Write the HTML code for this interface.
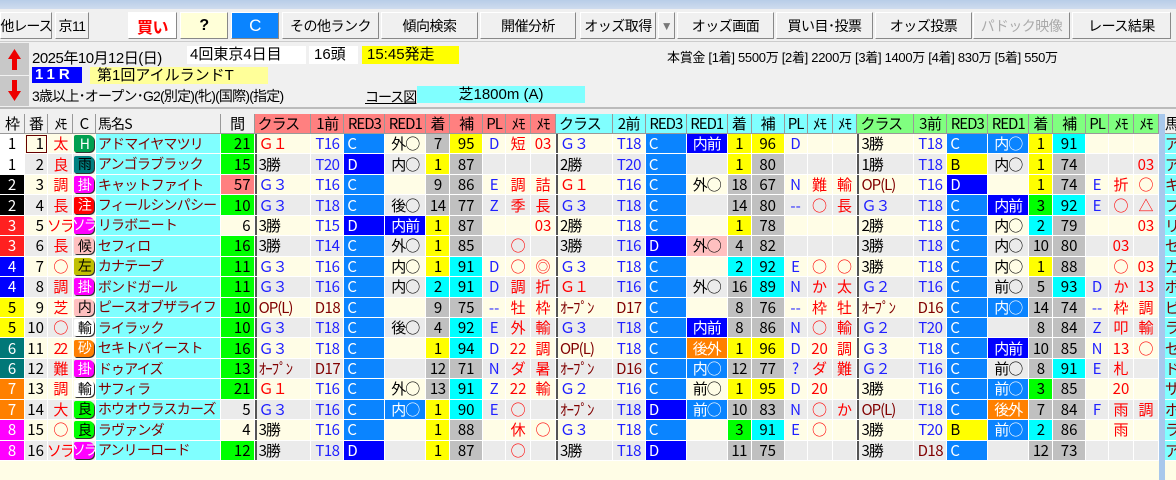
<!DOCTYPE html><html><head><meta charset="utf-8"><style>
*{margin:0;padding:0;box-sizing:border-box}
body{width:1176px;height:480px;overflow:hidden;background:#f0f0f0;font-family:"Liberation Sans","Noto Sans CJK JP",sans-serif;position:relative;font-size:14px;color:#000}
.tb{position:absolute;left:0;top:0;width:1176px;height:9px;background:linear-gradient(#b8cde8,#cfdcee)}
.btn{position:absolute;top:12px;height:27px;background:#f0f0f0;border:1px solid;border-color:#fff #888 #888 #fff;display:flex;align-items:center;justify-content:center;font-size:14px;letter-spacing:-0.5px;white-space:nowrap}
.abs{position:absolute;white-space:nowrap}
.grid{position:absolute;left:0;top:114px;width:1176px;font-family:"Noto Sans CJK JP","Liberation Sans",sans-serif}
.r{display:flex;height:20.44px}
.r>span{height:100%;border-right:1px solid #fff;border-bottom:1px solid #fff;display:flex;align-items:center;justify-content:center;white-space:nowrap;overflow:hidden;font-size:15px;line-height:1}
.h{height:20px}
.h>span{border-color:#999;font-size:15px;letter-spacing:-1px}
.r>span:nth-child(1){width:25px}.r>span:nth-child(2){width:23px;justify-content:flex-end;padding-right:3px}.r>span:nth-child(3){width:25px;color:#f00;letter-spacing:-2px}.r>span:nth-child(4){width:23px}.r>span:nth-child(5){width:125px;background:#80ffff;justify-content:flex-start;color:#800000;font-size:14px;letter-spacing:-0.8px;padding-left:2px}.r>span:nth-child(6){width:34px;justify-content:flex-end;padding-right:3px}
.r>span:nth-child(7),.r>span:nth-child(16),.r>span:nth-child(25){width:57px;justify-content:flex-start;padding-left:4px;box-shadow:inset 2px 0 #555;letter-spacing:-1px}
.r>span:nth-child(8),.r>span:nth-child(17),.r>span:nth-child(26){width:33px;color:#2020ff;letter-spacing:-0.5px}
.r>span:nth-child(9),.r>span:nth-child(18),.r>span:nth-child(27){width:41px;background:#0a84ff;color:#fff;justify-content:flex-start;padding-left:3px}
.r>span:nth-child(10),.r>span:nth-child(19),.r>span:nth-child(28){width:41px;letter-spacing:-1px}
.r>span:nth-child(11),.r>span:nth-child(20),.r>span:nth-child(29){width:24px;background:#c0c0c0;letter-spacing:-0.5px}
.r>span:nth-child(12),.r>span:nth-child(21),.r>span:nth-child(30){width:33px;background:#c0c0c0}
.r>span:nth-child(13),.r>span:nth-child(22),.r>span:nth-child(31){width:23px;color:#2020ff}
.r>span:nth-child(14),.r>span:nth-child(15),.r>span:nth-child(23),.r>span:nth-child(24),.r>span:nth-child(32),.r>span:nth-child(33){width:25px;color:#f00}
.r>span:nth-child(34){width:6px;background:#a8c8ec;border:none}
.r>span:nth-child(35){width:11px;background:#80ffff;justify-content:flex-start;color:#800000;border-right:none}
.h>span:nth-child(n){color:#000;background:#f0f0f0;box-shadow:none;padding:0;justify-content:center}
.h>span:nth-child(5){justify-content:flex-start;padding-left:2px}
.h>span:nth-child(n+7){background:#ff8080}
.h>span:nth-child(n+16){background:#80ffff}
.h>span:nth-child(n+25){background:#80ff80}
.h>span:nth-child(34){background:#a8c8ec}
.h>span:nth-child(35){background:#f0f0f0;justify-content:flex-start}
.h>span:nth-child(7),.h>span:nth-child(16),.h>span:nth-child(25){justify-content:flex-start;padding-left:3px}
.A{background:#fffde6}.B{background:#ebebeb}
.r>span.y{background:#ffff00}.r>span.c{background:#00ffff}.r>span.g{background:#00ff00}.r>span.sal{background:#ff8080}
.r>span.gr{background:#c0c0c0}.r>span.n{background:transparent}
.r>span.b{background:#0000ff;color:#fff}.r>span.lb{background:#0a84ff;color:#fff}.r>span.o{background:#ff8000;color:#fff}.r>span.pk{background:#ffc0c0}
.r>span.R{color:#f00}.r>span.BL{color:#2020ff}.r>span.BR{color:#800000}.r>span.K{color:#000}
.r>span.yb{background:#ffff00;color:#000}
.w1{background:#fff}.w2{background:#000;color:#fff}.w3{background:#ff2020;color:#fff}.w4{background:#0000ff;color:#fff}.w5{background:#ffff00}.w6{background:#007878;color:#fff}.w7{background:#ff8000;color:#fff}.w8{background:#ff00ff;color:#fff}
i{font-style:normal;display:flex;align-items:center;justify-content:center;width:20px;height:17px;border-radius:2px 5px 5px 2px;box-shadow:1px 1px 0 #333;font-size:14px;letter-spacing:-2px}
.iH{background:#00a050;color:#fff}.iu{background:#008080;color:#000}.ik{background:#ff00ff;color:#fff}.ic{background:#ff0000;color:#fff}.ip{background:#ffc0c0}.il{background:#c0c000}.iw{background:#fff}.io{background:#ff8000;color:#fff}.ig{background:#00ff00}
</style></head><body>
<div class="tb"></div>
<div class="btn" style="left:0;width:52px;letter-spacing:-1px">他レース</div>
<div class="btn" style="left:55px;width:34px">京11</div>
<div class="btn" style="left:128px;width:49px;background:#fff;color:#f00;font-weight:bold;font-size:16px">買い</div>
<div class="btn" style="left:180px;width:48px;background:#ffffd8;font-weight:bold;font-size:16px">?</div>
<div class="btn" style="left:231px;width:48px;background:#0a84ff;color:#fff;font-size:17px">C</div>
<div class="btn" style="left:282px;width:97px">その他ランク</div>
<div class="btn" style="left:381px;width:97px">傾向検索</div>
<div class="btn" style="left:480px;width:96px">開催分析</div>
<div class="btn" style="left:580px;width:76px">オッズ取得</div>
<div class="btn" style="left:658px;width:17px;color:#777;font-size:12px">▼</div>
<div class="btn" style="left:677px;width:97px">オッズ画面</div>
<div class="btn" style="left:776px;width:97px">買い目･投票</div>
<div class="btn" style="left:875px;width:97px">オッズ投票</div>
<div class="btn" style="left:973px;width:97px;color:#aaa">パドック映像</div>
<div class="btn" style="left:1072px;width:99px">レース結果</div>
<div class="abs" style="left:0;top:41px;width:1176px;height:1px;background:#ccc"></div>
<div class="abs" style="left:0;top:43px;width:29px;height:32px;background:#c8c8c8"><svg width="29" height="32"><path d="M14.5 6 L8 16 H12 V27 H17 V16 H21 Z" fill="#e00"/></svg></div>
<div class="abs" style="left:0;top:76px;width:29px;height:30px;background:#c8c8c8"><svg width="29" height="30"><path d="M14.5 25 L8 15 H12 V4 H17 V15 H21 Z" fill="#e00"/></svg></div>
<div class="abs" style="left:32px;top:47px;font-size:15px;letter-spacing:-0.5px">2025年10月12日(日)</div>
<div class="abs" style="left:187px;top:46px;width:119px;height:18px;background:#fff;font-size:15px;padding-left:3px;line-height:18px">4回東京4日目</div>
<div class="abs" style="left:309px;top:46px;width:49px;height:18px;background:#fff;font-size:15px;padding-left:5px;line-height:18px">16頭</div>
<div class="abs" style="left:362px;top:46px;width:97px;height:18px;background:#ffff00;font-size:15px;padding-left:5px;line-height:18px">15:45発走</div>
<div class="abs" style="left:32px;top:67px;width:50px;height:16px;background:#0000ff;color:#fff;font-size:15px;font-weight:bold;line-height:16px;padding-left:3px;letter-spacing:4px">11R</div>
<div class="abs" style="left:90px;top:67px;width:178px;height:17px;background:#ffff99;font-size:15px;line-height:17px;padding-left:7px">第1回アイルランドT</div>
<div class="abs" style="left:32px;top:86px;font-size:14px;letter-spacing:-0.8px">3歳以上･オープン･G2(別定)(牝)(国際)(指定)</div>
<div class="abs" style="left:365px;top:87px;font-size:14px;text-decoration:underline;letter-spacing:-1px">コース図</div>
<div class="abs" style="left:417px;top:86px;width:168px;height:17px;background:#80ffff;font-size:15px;line-height:17px;text-align:center">芝1800m (A)</div>
<div class="abs" style="left:667px;top:47px;font-size:13px;letter-spacing:-0.3px">本賞金 [1着] 5500万 [2着] 2200万 [3着] 1400万 [4着] 830万 [5着] 550万</div>
<div class="abs" style="left:0;top:107px;width:1176px;height:2px;background:#bbb"></div>
<div class="abs" style="left:0;top:461px;width:1159px;height:19px;background:#fffde6"></div>
<div class="abs" style="left:1159px;top:461px;width:6px;height:19px;background:#a8c8ec"></div>
<div class="abs" style="left:1165px;top:461px;width:11px;height:19px;background:#fffde6"></div>
<div class="grid">
<div class="r h"><span>枠</span><span>番</span><span>ﾒﾓ</span><span>C</span><span>馬名S</span><span>間</span><span>クラス</span><span>1前</span><span>RED3</span><span>RED1</span><span>着</span><span>補</span><span>PL</span><span>ﾒﾓ</span><span>ﾒﾓ</span><span>クラス</span><span>2前</span><span>RED3</span><span>RED1</span><span>着</span><span>補</span><span>PL</span><span>ﾒﾓ</span><span>ﾒﾓ</span><span>クラス</span><span>3前</span><span>RED3</span><span>RED1</span><span>着</span><span>補</span><span>PL</span><span>ﾒﾓ</span><span>ﾒﾓ</span><span></span><span>馬</span></div>

<div class="r A"><span class="w1">1</span><span style="outline:1px solid #600;outline-offset:-2px">1</span><span>太</span><span><i class="iH">H</i></span><span>アドマイヤマツリ</span><span class="g">21</span><span class="R">Ｇ１</span><span>T16</span><span>C</span><span>外○</span><span>7</span><span class="y">95</span><span>D</span><span>短</span><span>03</span><span class="BL">Ｇ３</span><span>T18</span><span>C</span><span class="b">内前</span><span class="y">1</span><span class="y">96</span><span>D</span><span></span><span></span><span class="K">3勝</span><span>T18</span><span>C</span><span class="lb">内○</span><span class="y">1</span><span class="c">91</span><span></span><span></span><span></span><span></span><span>ア</span></div>
<div class="r B"><span class="w1">1</span><span>2</span><span>良</span><span><i class="iu">雨</i></span><span>アンゴラブラック</span><span class="g">15</span><span>3勝</span><span>T20</span><span class="b">D</span><span>内○</span><span class="y">1</span><span>87</span><span></span><span></span><span></span><span>2勝</span><span>T20</span><span>C</span><span></span><span class="y">1</span><span>80</span><span></span><span></span><span></span><span>1勝</span><span>T18</span><span class="yb">B</span><span>内○</span><span class="y">1</span><span>74</span><span></span><span></span><span>03</span><span></span><span>ア</span></div>
<div class="r A"><span class="w2">2</span><span>3</span><span>調</span><span><i class="ik">掛</i></span><span>キャットファイト</span><span class="sal">57</span><span class="BL">Ｇ３</span><span>T16</span><span>C</span><span></span><span>9</span><span>86</span><span>E</span><span>調</span><span>詰</span><span class="R">Ｇ１</span><span>T16</span><span>C</span><span>外○</span><span>18</span><span>67</span><span>N</span><span>難</span><span>輸</span><span class="BR">OP(L)</span><span>T16</span><span class="b">D</span><span></span><span class="y">1</span><span>74</span><span>E</span><span>折</span><span>○</span><span></span><span>キ</span></div>
<div class="r B"><span class="w2">2</span><span>4</span><span>長</span><span><i class="ic">注</i></span><span>フィールシンパシー</span><span class="g">10</span><span class="BL">Ｇ３</span><span>T18</span><span>C</span><span>後○</span><span>14</span><span>77</span><span>Z</span><span>季</span><span>長</span><span class="BL">Ｇ３</span><span>T18</span><span>C</span><span></span><span>14</span><span>80</span><span>--</span><span>○</span><span>長</span><span class="BL">Ｇ３</span><span>T18</span><span>C</span><span class="b">内前</span><span class="g">3</span><span class="c">92</span><span>E</span><span>○</span><span>△</span><span></span><span>フ</span></div>
<div class="r A"><span class="w3">3</span><span>5</span><span>ソラ</span><span><i class="ik">ソラ</i></span><span>リラボニート</span><span>6</span><span>3勝</span><span>T15</span><span class="b">D</span><span class="b">内前</span><span class="y">1</span><span>87</span><span></span><span></span><span>03</span><span>2勝</span><span>T18</span><span>C</span><span></span><span class="y">1</span><span>78</span><span></span><span></span><span></span><span>2勝</span><span>T18</span><span>C</span><span>内○</span><span class="c">2</span><span>79</span><span></span><span></span><span>03</span><span></span><span>リ</span></div>
<div class="r B"><span class="w3">3</span><span>6</span><span>長</span><span><i class="ip">候</i></span><span>セフィロ</span><span class="g">16</span><span>3勝</span><span>T14</span><span>C</span><span>外○</span><span class="y">1</span><span>85</span><span></span><span>○</span><span></span><span>3勝</span><span>T16</span><span class="b">D</span><span class="pk">外○</span><span>4</span><span>82</span><span></span><span></span><span></span><span>3勝</span><span>T18</span><span>C</span><span>内○</span><span>10</span><span>80</span><span></span><span>03</span><span></span><span></span><span>セ</span></div>
<div class="r A"><span class="w4">4</span><span>7</span><span>○</span><span><i class="il">左</i></span><span>カナテープ</span><span class="g">11</span><span class="BL">Ｇ３</span><span>T16</span><span>C</span><span>内○</span><span class="y">1</span><span class="c">91</span><span>D</span><span>○</span><span>◎</span><span class="BL">Ｇ３</span><span>T18</span><span>C</span><span></span><span class="c">2</span><span class="c">92</span><span>E</span><span>○</span><span>○</span><span>3勝</span><span>T18</span><span>C</span><span>内○</span><span class="y">1</span><span>88</span><span></span><span>○</span><span>03</span><span></span><span>カ</span></div>
<div class="r B"><span class="w4">4</span><span>8</span><span>調</span><span><i class="ik">掛</i></span><span>ボンドガール</span><span class="g">11</span><span class="BL">Ｇ３</span><span>T16</span><span>C</span><span>内○</span><span class="c">2</span><span class="c">91</span><span>D</span><span>調</span><span>折</span><span class="R">Ｇ１</span><span>T16</span><span>C</span><span>外○</span><span>16</span><span class="c">89</span><span>N</span><span>か</span><span>太</span><span class="BL">Ｇ２</span><span>T16</span><span>C</span><span>前○</span><span>5</span><span class="c">93</span><span>D</span><span>か</span><span>13</span><span></span><span>ボ</span></div>
<div class="r A"><span class="w5">5</span><span>9</span><span>芝</span><span><i class="ip">内</i></span><span>ピースオブザライフ</span><span class="g">10</span><span class="BR">OP(L)</span><span class="BR">D18</span><span>C</span><span></span><span>9</span><span>75</span><span>--</span><span>牡</span><span>枠</span><span class="BR">ｵｰﾌﾟﾝ</span><span class="BR">D17</span><span>C</span><span></span><span>8</span><span>76</span><span>--</span><span>枠</span><span>牡</span><span class="BR">ｵｰﾌﾟﾝ</span><span class="BR">D16</span><span>C</span><span class="lb">内○</span><span>14</span><span>74</span><span>--</span><span>枠</span><span>調</span><span></span><span>ピ</span></div>
<div class="r B"><span class="w5">5</span><span>10</span><span>○</span><span><i class="iw">輸</i></span><span>ライラック</span><span class="g">10</span><span class="BL">Ｇ３</span><span>T18</span><span>C</span><span>後○</span><span>4</span><span class="c">92</span><span>E</span><span>外</span><span>輸</span><span class="BL">Ｇ３</span><span>T18</span><span>C</span><span class="b">内前</span><span>8</span><span>86</span><span>N</span><span>○</span><span>輸</span><span class="BL">Ｇ２</span><span>T20</span><span>C</span><span></span><span>8</span><span>84</span><span>Z</span><span>叩</span><span>輸</span><span></span><span>ラ</span></div>
<div class="r A"><span class="w6">6</span><span>11</span><span>22</span><span><i class="io">砂</i></span><span>セキトバイースト</span><span class="g">16</span><span class="BL">Ｇ３</span><span>T18</span><span>C</span><span></span><span class="y">1</span><span class="c">94</span><span>D</span><span>22</span><span>調</span><span class="BR">OP(L)</span><span>T18</span><span>C</span><span class="o">後外</span><span class="y">1</span><span class="y">96</span><span>D</span><span>20</span><span>調</span><span class="BL">Ｇ３</span><span>T18</span><span>C</span><span class="b">内前</span><span>10</span><span>85</span><span>N</span><span>13</span><span>○</span><span></span><span>セ</span></div>
<div class="r B"><span class="w6">6</span><span>12</span><span>難</span><span><i class="ik">掛</i></span><span>ドゥアイズ</span><span class="g">13</span><span class="BR">ｵｰﾌﾟﾝ</span><span class="BR">D17</span><span>C</span><span></span><span>12</span><span>71</span><span>N</span><span>ダ</span><span>暑</span><span class="BR">ｵｰﾌﾟﾝ</span><span class="BR">D16</span><span>C</span><span class="lb">内○</span><span>12</span><span>77</span><span>?</span><span>ダ</span><span>難</span><span class="BL">Ｇ２</span><span>T16</span><span>C</span><span>前○</span><span>8</span><span class="c">91</span><span>E</span><span>札</span><span></span><span></span><span>ド</span></div>
<div class="r A"><span class="w7">7</span><span>13</span><span>調</span><span><i class="iw">輸</i></span><span>サフィラ</span><span class="g">21</span><span class="R">Ｇ１</span><span>T16</span><span>C</span><span>外○</span><span>13</span><span class="c">91</span><span>Z</span><span>22</span><span>輸</span><span class="BL">Ｇ２</span><span>T16</span><span>C</span><span>前○</span><span class="y">1</span><span class="y">95</span><span>D</span><span>20</span><span></span><span>3勝</span><span>T16</span><span>C</span><span class="lb">前○</span><span class="g">3</span><span>85</span><span></span><span>20</span><span></span><span></span><span>サ</span></div>
<div class="r B"><span class="w7">7</span><span>14</span><span>大</span><span><i class="ig">良</i></span><span>ホウオウラスカーズ</span><span>5</span><span class="BL">Ｇ３</span><span>T16</span><span>C</span><span class="lb">内○</span><span class="y">1</span><span class="c">90</span><span>E</span><span>○</span><span></span><span class="BR">ｵｰﾌﾟﾝ</span><span>T18</span><span class="b">D</span><span class="lb">前○</span><span>10</span><span>83</span><span>N</span><span>○</span><span>か</span><span class="BR">OP(L)</span><span>T18</span><span>C</span><span class="o">後外</span><span>7</span><span>84</span><span>F</span><span>雨</span><span>調</span><span></span><span>ホ</span></div>
<div class="r A"><span class="w8">8</span><span>15</span><span>○</span><span><i class="ig">良</i></span><span>ラヴァンダ</span><span>4</span><span>3勝</span><span>T16</span><span>C</span><span></span><span class="y">1</span><span>88</span><span></span><span>休</span><span>○</span><span class="BL">Ｇ３</span><span>T18</span><span>C</span><span></span><span class="g">3</span><span class="c">91</span><span>E</span><span>○</span><span></span><span>3勝</span><span>T20</span><span class="yb">B</span><span class="lb">前○</span><span class="c">2</span><span>86</span><span></span><span>雨</span><span></span><span></span><span>ラ</span></div>
<div class="r B"><span class="w8">8</span><span>16</span><span>ソラ</span><span><i class="ik">ソラ</i></span><span>アンリーロード</span><span class="g">12</span><span>3勝</span><span>T18</span><span class="b">D</span><span></span><span class="y">1</span><span>87</span><span></span><span>○</span><span></span><span>3勝</span><span>T18</span><span class="b">D</span><span></span><span>11</span><span>75</span><span></span><span></span><span></span><span>3勝</span><span class="BR">D18</span><span>C</span><span></span><span>12</span><span>73</span><span></span><span></span><span></span><span></span><span>ア</span></div>
</div>
</body></html>
